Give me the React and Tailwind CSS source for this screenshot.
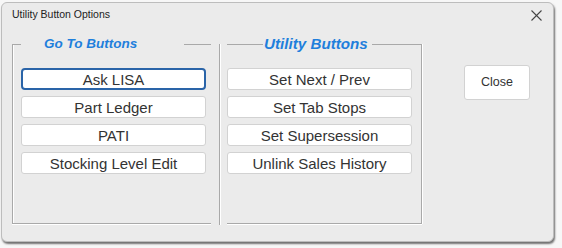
import React from "react";

const goTo = ["Ask LISA", "Part Ledger", "PATI", "Stocking Level Edit"];
const utility = ["Set Next / Prev", "Set Tab Stops", "Set Supersession", "Unlink Sales History"];

const Btn = ({ label, focused }) => (
  <button
    type="button"
    className={`h-[22px] w-[185px] bg-white text-[15px] leading-none text-[#333] ${
      focused
        ? "border-2 border-[#2a64a8] rounded-[4px]"
        : "border border-[#d2d2d2] rounded-[3px]"
    }`}
  >
    {label}
  </button>
);

export default function App() {
  return (
    <div
      className="w-[562px] h-[248px] bg-[#f7f7f7] overflow-hidden"
      style={{ fontFamily: '"Liberation Sans", Arial, sans-serif' }}
    >
      <div className="ml-[1px] mt-[2px] w-[553px] h-[240px] bg-[#ebebeb] border border-[#bdbdbd] rounded-[6px] shadow-[1px_2px_2px_rgba(0,0,0,0.55)] flex flex-col">
        {/* title bar */}
        <div className="h-[24px] flex items-center justify-between pl-[10px] pr-[11px]">
          <span className="text-[10.5px] text-[#222]">Utility Button Options</span>
          <svg width="11" height="11" viewBox="0 0 11 11" fill="none" stroke="#444" strokeWidth="1.1">
            <line x1="0.5" y1="0.5" x2="10.5" y2="10.5" />
            <line x1="10.5" y1="0.5" x2="0.5" y2="10.5" />
          </svg>
        </div>

        <div className="flex pl-[10px] mt-[17px]">
          {/* Go To group */}
          <div className="w-[199px] h-[180px] border-l border-b border-[#a9a9a9] shadow-[inset_1px_0_0_#fff,0_1px_0_#fff] flex flex-col">
            <div className="h-px flex items-center">
              <div className="h-px w-[8px] bg-[#a9a9a9]" />
              <span className="ml-[23px] text-[13.5px] font-bold italic text-[#1f7fdc] whitespace-nowrap">
                Go To Buttons
              </span>
              <div className="h-px w-[27px] ml-auto bg-[#a9a9a9]" />
            </div>
            <div className="mt-[23px] pl-[8px] flex flex-col gap-[6px]">
              {goTo.map((b, i) => (
                <Btn key={b} label={b} focused={i === 0} />
              ))}
            </div>
          </div>

          <div className="ml-[8px] w-px h-[181px] bg-[#a9a9a9] shadow-[1px_0_0_#fff]" />

          {/* Utility group */}
          <div className="ml-[7px] w-[195px] h-[180px] border-r border-b border-[#a9a9a9] shadow-[1px_0_0_#fff,0_1px_0_#fff] flex flex-col">
            <div className="h-px flex items-center">
              <div className="h-px w-[36px] bg-[#a9a9a9]" />
              <span className="ml-[1px] text-[15.2px] font-bold italic text-[#1f7fdc] whitespace-nowrap">
                Utility Buttons
              </span>
              <div className="h-px flex-1 ml-[4px] bg-[#a9a9a9]" />
            </div>
            <div className="mt-[23px] flex flex-col gap-[6px]">
              {utility.map((b) => (
                <Btn key={b} label={b} />
              ))}
            </div>
          </div>

          <button
            type="button"
            className="ml-[42px] mt-[21px] w-[66px] h-[35px] bg-white border border-[#d2d2d2] rounded-[3px] text-[12.5px] text-[#333]"
          >
            Close
          </button>
        </div>
      </div>
    </div>
  );
}
